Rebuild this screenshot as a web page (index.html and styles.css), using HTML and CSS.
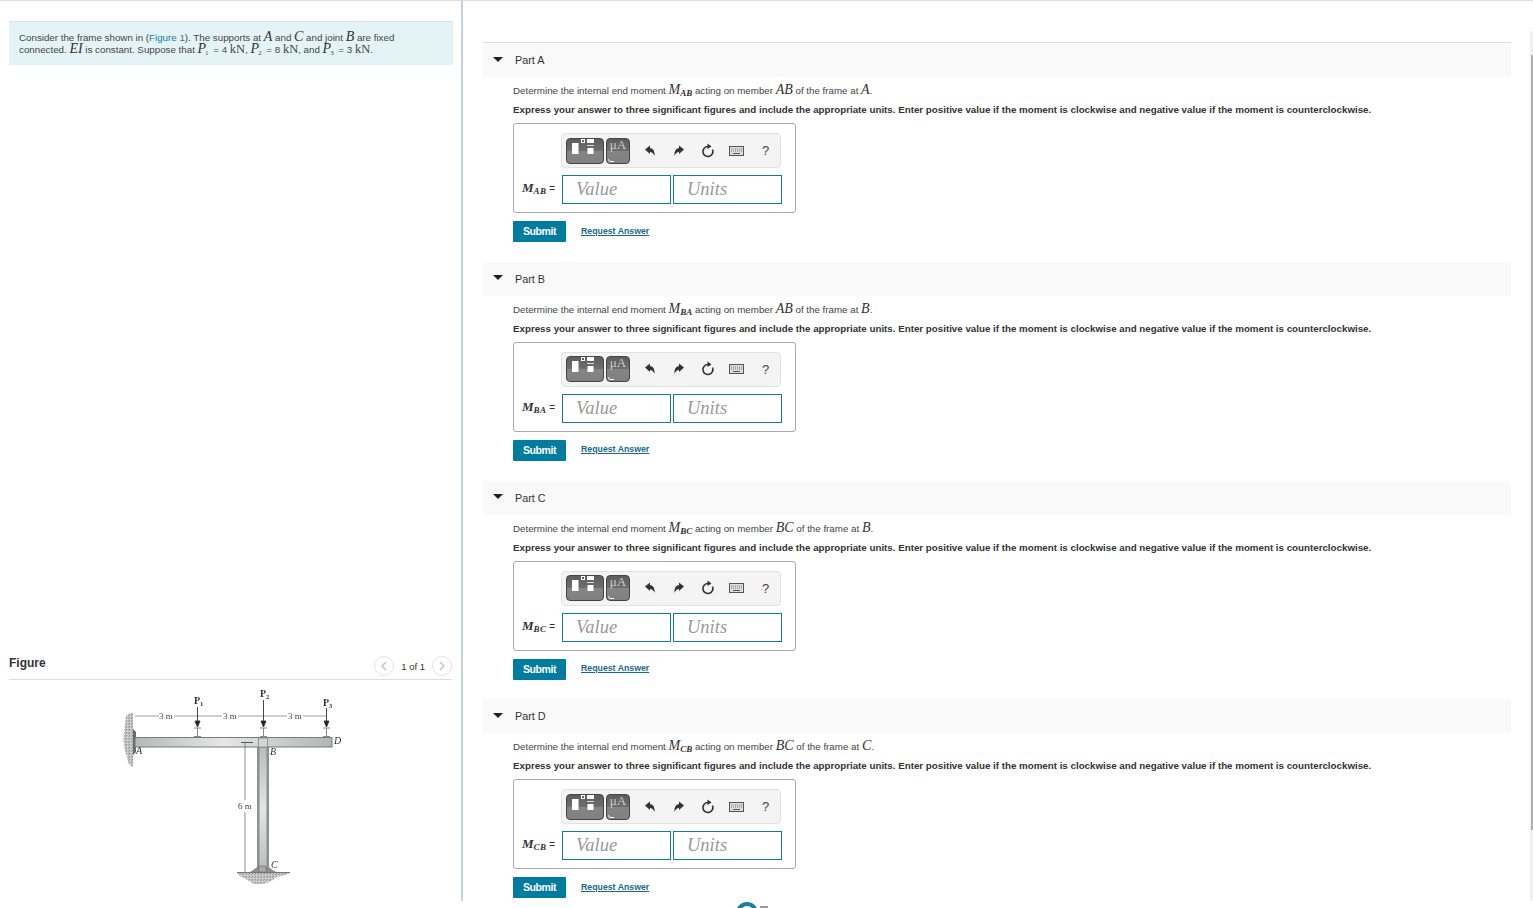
FILE: index.html
```html
<!DOCTYPE html>
<html lang="en">
  <head>
    <meta charset="UTF-8" />
    <meta name="viewport" content="width=device-width, initial-scale=1.0" />
    <title>Frame Problem</title>
    <link rel="stylesheet" href="styles.css">
  </head>
  <body>
    <div class="page">
      <div class="left-pane">
        <div class="intro">
          Consider the frame shown in (<span class="link">Figure 1</span>). The supports at <i class="m">A</i> and <i class="m">C</i> and joint <i class="m">B</i> are fixed<br />
          connected. <i class="m">EI</i> is constant. Suppose that <i class="m">P</i><sub class="mini">1</sub> = 4 <span class="u">kN</span>, <i class="m">P</i><sub class="mini">2</sub> = 8 <span class="u">kN</span>, and <i class="m">P</i><sub class="mini">3</sub> = 3 <span class="u">kN</span>.
        </div>

        <div class="figure-head">
          <span class="figure-title">Figure</span>
          <div class="pager">
            <span class="pager-btn"><svg width="8" height="10" viewBox="0 0 8 10"><path d="M6 1 L2 5 L6 9" fill="none" stroke="#b9c0cc" stroke-width="1.4" /></svg></span>
            <span class="pager-text">1 of 1</span>
            <span class="pager-btn"><svg width="8" height="10" viewBox="0 0 8 10"><path d="M2 1 L6 5 L2 9" fill="none" stroke="#b9c0cc" stroke-width="1.4" /></svg></span>
          </div>
        </div>

        <svg class="frame-fig" width="240" height="220" viewBox="110 680 240 220">
          <defs>
            <linearGradient id="beamH" x1="0" y1="0" x2="1" y2="0">
              <stop offset="0" stop-color="#b5b8b7" />
              <stop offset="0.45" stop-color="#e6e7e6" />
              <stop offset="1" stop-color="#b2b5b4" />
            </linearGradient>
            <linearGradient id="beamV" x1="0" y1="0" x2="0" y2="1">
              <stop offset="0" stop-color="#b9bcbb" />
              <stop offset="0.5" stop-color="#e4e5e4" />
              <stop offset="1" stop-color="#b9bcbb" />
            </linearGradient>
            <pattern id="speckle" width="3" height="3" patternUnits="userSpaceOnUse">
              <rect width="3" height="3" fill="#c2c3c2" />
              <rect x="0" y="0" width="1" height="1" fill="#8f908f" />
              <rect x="2" y="1" width="1" height="1" fill="#a3a4a3" />
              <rect x="1" y="2" width="1" height="1" fill="#e0e0e0" />
            </pattern>
            <filter id="soft"><feGaussianBlur stdDeviation="0.35" /></filter>
          </defs>
          <g filter="url(#soft)">
            <!-- wall -->
            <path d="M126 716 Q131 712 133 713 L133 767 Q128 766 127 757 Q122 745 124 733 Z" fill="url(#speckle)" />
            <path d="M133 729 L136 732 L136 752 L133 755 Z" fill="#6a6a6a" />
            <!-- column -->
            <rect x="257" y="746" width="12" height="126" fill="url(#beamV)" />
            <rect x="257" y="746" width="2.500" height="124" fill="#8d9090" />
            <rect x="266.500" y="746" width="2.500" height="124" fill="#8d9090" />
            <!-- beam -->
            <rect x="135" y="737.500" width="197" height="9.500" fill="url(#beamH)" stroke="#777a7a" stroke-width="1" />
            <rect x="258.500" y="738" width="9" height="9" fill="#d4d5d4" stroke="#888" stroke-width="0.8" />
            <!-- base -->
            <path d="M237 873 L290 873 Q284 876 276 877 Q270 885 254 884 Q246 879 240 876 Z" fill="url(#speckle)" />
            <path d="M237 872.500 L290 872.500" stroke="#777" stroke-width="1" />
            <path d="M250 872 Q255 869 257 867 L269 867 Q272 870 276 872 Z" fill="#8d8f8e" />
            <rect x="259" y="866" width="7" height="6" fill="#aaa" stroke="#666" stroke-width="0.6" />
            <!-- dimension lines -->
            <path d="M135 716 H159 M174 716 H222 M238 716 H287 M303 716 H326" stroke="#777" stroke-width="0.7" fill="none" />
            <path d="M241 742.500 H253" stroke="#555" stroke-width="1" />
            <path d="M245 743 V800 M245 812 V872" stroke="#666" stroke-width="0.7" />
            <!-- loads -->
            <g stroke="#333" stroke-width="0.9" fill="#222">
              <path d="M197.500 707 V722" fill="none" />
              <path d="M195 721 L200 721 L197.500 727 Z" />
              <path d="M263.500 700 V722" fill="none" />
              <path d="M261 721 L266 721 L263.500 727 Z" />
              <path d="M326.500 708 V722" fill="none" />
              <path d="M324 721 L329 721 L326.500 727 Z" />
            </g>
            <path d="M194 728 H201 M197.500 728 V737 M194 736.500 H201 M260 728 H267 M263.500 728 V737 M260 736.500 H267 M323 728 H330 M326.500 728 V737 M323 736.500 H330" stroke="#888" stroke-width="1" fill="none" />
            <!-- labels -->
            <g class="fig-label">
              <text x="159" y="719">3 m</text>
              <text x="223" y="719">3 m</text>
              <text x="288" y="719">3 m</text>
              <text x="238" y="809">6 m</text>
            </g>
            <g class="fig-bold">
              <text x="194" y="704">P<tspan class="fig-sub" dy="2">1</tspan></text>
              <text x="260" y="697">P<tspan class="fig-sub" dy="2">2</tspan></text>
              <text x="323" y="706">P<tspan class="fig-sub" dy="2">3</tspan></text>
            </g>
            <g class="fig-italic">
              <text x="136" y="754">A</text>
              <text x="270" y="755">B</text>
              <text x="334" y="744">D</text>
              <text x="271" y="868">C</text>
            </g>
          </g>
        </svg>
      </div>

      <div class="right-pane">
        <div class="part first">
          <div class="part-head"><span class="caret"></span>Part A</div>
          <div class="part-body">
            <p class="prompt">Determine the internal end moment <i class="m big">M<sub>AB</sub></i> acting on member <i class="m big">AB</i> of the frame at <i class="m big">A</i>.</p>
            <p class="express">Express your answer to three significant figures and include the appropriate units. Enter positive value if the moment is clockwise and negative value if the moment is counterclockwise.</p>
            <div class="answer-box">
              <div class="toolbar">
                <span class="tpl-btn wide"><svg width="36" height="24" viewBox="0 0 36 24"><rect x="5" y="4" width="6.500" height="11" fill="#fff" /><rect x="14.500" y="0.500" width="3" height="3" fill="none" stroke="#fff" /><rect x="20" y="0" width="7" height="4" fill="#fff" /><rect x="20" y="6" width="7" height="1" fill="#ddd" /><rect x="20.500" y="9" width="6" height="6" fill="#fff" /></svg></span>
                <span class="tpl-btn narrow">μA</span>
                <span class="tool"><svg width="14" height="14" viewBox="0 0 14 14"><path d="M2 5.500 L7 1.500 V4 Q12 4.500 11.500 12 Q10 8 7 8 V10 Z" fill="#333" /></svg></span>
                <span class="tool"><svg width="14" height="14" viewBox="0 0 14 14"><path d="M12 5.500 L7 1.500 V4 Q2 4.500 2.500 12 Q4 8 7 8 V10 Z" fill="#333" /></svg></span>
                <span class="tool"><svg width="16" height="16" viewBox="0 0 16 16"><path d="M8 3.500 A5 5 0 1 0 12.500 6.500" fill="none" stroke="#333" stroke-width="1.600" /><path d="M7.500 0.500 L11.500 3.500 L7.500 6 Z" fill="#333" /></svg></span>
                <span class="tool"><svg width="15" height="10" viewBox="0 0 15 10"><rect x="0.500" y="0.500" width="14" height="9" fill="#ddd" stroke="#555" /><path d="M2 3 H13 M2 5 H13" stroke="#777" stroke-dasharray="1 1" /><path d="M4 7.500 H11" stroke="#555" /></svg></span>
                <span class="tool help">?</span>
              </div>
              <div class="answer-row">
                <span class="var-label"><i class="m">M<sub>AB</sub></i> =</span>
                <span class="field">Value</span>
                <span class="field">Units</span>
              </div>
            </div>
            <div class="actions">
              <span class="submit">Submit</span>
              <a class="request">Request Answer</a>
            </div>
          </div>
        </div>

        <div class="part">
          <div class="part-head"><span class="caret"></span>Part B</div>
          <div class="part-body">
            <p class="prompt">Determine the internal end moment <i class="m big">M<sub>BA</sub></i> acting on member <i class="m big">AB</i> of the frame at <i class="m big">B</i>.</p>
            <p class="express">Express your answer to three significant figures and include the appropriate units. Enter positive value if the moment is clockwise and negative value if the moment is counterclockwise.</p>
            <div class="answer-box">
              <div class="toolbar">
                <span class="tpl-btn wide"><svg width="36" height="24" viewBox="0 0 36 24"><rect x="5" y="4" width="6.500" height="11" fill="#fff" /><rect x="14.500" y="0.500" width="3" height="3" fill="none" stroke="#fff" /><rect x="20" y="0" width="7" height="4" fill="#fff" /><rect x="20" y="6" width="7" height="1" fill="#ddd" /><rect x="20.500" y="9" width="6" height="6" fill="#fff" /></svg></span>
                <span class="tpl-btn narrow">μA</span>
                <span class="tool"><svg width="14" height="14" viewBox="0 0 14 14"><path d="M2 5.500 L7 1.500 V4 Q12 4.500 11.500 12 Q10 8 7 8 V10 Z" fill="#333" /></svg></span>
                <span class="tool"><svg width="14" height="14" viewBox="0 0 14 14"><path d="M12 5.500 L7 1.500 V4 Q2 4.500 2.500 12 Q4 8 7 8 V10 Z" fill="#333" /></svg></span>
                <span class="tool"><svg width="16" height="16" viewBox="0 0 16 16"><path d="M8 3.500 A5 5 0 1 0 12.500 6.500" fill="none" stroke="#333" stroke-width="1.600" /><path d="M7.500 0.500 L11.500 3.500 L7.500 6 Z" fill="#333" /></svg></span>
                <span class="tool"><svg width="15" height="10" viewBox="0 0 15 10"><rect x="0.500" y="0.500" width="14" height="9" fill="#ddd" stroke="#555" /><path d="M2 3 H13 M2 5 H13" stroke="#777" stroke-dasharray="1 1" /><path d="M4 7.500 H11" stroke="#555" /></svg></span>
                <span class="tool help">?</span>
              </div>
              <div class="answer-row">
                <span class="var-label"><i class="m">M<sub>BA</sub></i> =</span>
                <span class="field">Value</span>
                <span class="field">Units</span>
              </div>
            </div>
            <div class="actions">
              <span class="submit">Submit</span>
              <a class="request">Request Answer</a>
            </div>
          </div>
        </div>

        <div class="part">
          <div class="part-head"><span class="caret"></span>Part C</div>
          <div class="part-body">
            <p class="prompt">Determine the internal end moment <i class="m big">M<sub>BC</sub></i> acting on member <i class="m big">BC</i> of the frame at <i class="m big">B</i>.</p>
            <p class="express">Express your answer to three significant figures and include the appropriate units. Enter positive value if the moment is clockwise and negative value if the moment is counterclockwise.</p>
            <div class="answer-box">
              <div class="toolbar">
                <span class="tpl-btn wide"><svg width="36" height="24" viewBox="0 0 36 24"><rect x="5" y="4" width="6.500" height="11" fill="#fff" /><rect x="14.500" y="0.500" width="3" height="3" fill="none" stroke="#fff" /><rect x="20" y="0" width="7" height="4" fill="#fff" /><rect x="20" y="6" width="7" height="1" fill="#ddd" /><rect x="20.500" y="9" width="6" height="6" fill="#fff" /></svg></span>
                <span class="tpl-btn narrow">μA</span>
                <span class="tool"><svg width="14" height="14" viewBox="0 0 14 14"><path d="M2 5.500 L7 1.500 V4 Q12 4.500 11.500 12 Q10 8 7 8 V10 Z" fill="#333" /></svg></span>
                <span class="tool"><svg width="14" height="14" viewBox="0 0 14 14"><path d="M12 5.500 L7 1.500 V4 Q2 4.500 2.500 12 Q4 8 7 8 V10 Z" fill="#333" /></svg></span>
                <span class="tool"><svg width="16" height="16" viewBox="0 0 16 16"><path d="M8 3.500 A5 5 0 1 0 12.500 6.500" fill="none" stroke="#333" stroke-width="1.600" /><path d="M7.500 0.500 L11.500 3.500 L7.500 6 Z" fill="#333" /></svg></span>
                <span class="tool"><svg width="15" height="10" viewBox="0 0 15 10"><rect x="0.500" y="0.500" width="14" height="9" fill="#ddd" stroke="#555" /><path d="M2 3 H13 M2 5 H13" stroke="#777" stroke-dasharray="1 1" /><path d="M4 7.500 H11" stroke="#555" /></svg></span>
                <span class="tool help">?</span>
              </div>
              <div class="answer-row">
                <span class="var-label"><i class="m">M<sub>BC</sub></i> =</span>
                <span class="field">Value</span>
                <span class="field">Units</span>
              </div>
            </div>
            <div class="actions">
              <span class="submit">Submit</span>
              <a class="request">Request Answer</a>
            </div>
          </div>
        </div>

        <div class="part">
          <div class="part-head"><span class="caret"></span>Part D</div>
          <div class="part-body">
            <p class="prompt">Determine the internal end moment <i class="m big">M<sub>CB</sub></i> acting on member <i class="m big">BC</i> of the frame at <i class="m big">C</i>.</p>
            <p class="express">Express your answer to three significant figures and include the appropriate units. Enter positive value if the moment is clockwise and negative value if the moment is counterclockwise.</p>
            <div class="answer-box">
              <div class="toolbar">
                <span class="tpl-btn wide"><svg width="36" height="24" viewBox="0 0 36 24"><rect x="5" y="4" width="6.500" height="11" fill="#fff" /><rect x="14.500" y="0.500" width="3" height="3" fill="none" stroke="#fff" /><rect x="20" y="0" width="7" height="4" fill="#fff" /><rect x="20" y="6" width="7" height="1" fill="#ddd" /><rect x="20.500" y="9" width="6" height="6" fill="#fff" /></svg></span>
                <span class="tpl-btn narrow">μA</span>
                <span class="tool"><svg width="14" height="14" viewBox="0 0 14 14"><path d="M2 5.500 L7 1.500 V4 Q12 4.500 11.500 12 Q10 8 7 8 V10 Z" fill="#333" /></svg></span>
                <span class="tool"><svg width="14" height="14" viewBox="0 0 14 14"><path d="M12 5.500 L7 1.500 V4 Q2 4.500 2.500 12 Q4 8 7 8 V10 Z" fill="#333" /></svg></span>
                <span class="tool"><svg width="16" height="16" viewBox="0 0 16 16"><path d="M8 3.500 A5 5 0 1 0 12.500 6.500" fill="none" stroke="#333" stroke-width="1.600" /><path d="M7.500 0.500 L11.500 3.500 L7.500 6 Z" fill="#333" /></svg></span>
                <span class="tool"><svg width="15" height="10" viewBox="0 0 15 10"><rect x="0.500" y="0.500" width="14" height="9" fill="#ddd" stroke="#555" /><path d="M2 3 H13 M2 5 H13" stroke="#777" stroke-dasharray="1 1" /><path d="M4 7.500 H11" stroke="#555" /></svg></span>
                <span class="tool help">?</span>
              </div>
              <div class="answer-row">
                <span class="var-label"><i class="m">M<sub>CB</sub></i> =</span>
                <span class="field">Value</span>
                <span class="field">Units</span>
              </div>
            </div>
            <div class="actions">
              <span class="submit">Submit</span>
              <a class="request">Request Answer</a>
            </div>
          </div>
        </div>

        <div class="feedback-mark"></div>
        <div class="feedback-dash"></div>
      </div>

      <div class="scrollbar"><div class="scroll-thumb"></div></div>
    </div>
  </body>
</html>
```

FILE: styles.css
```css
* {
  margin: 0;
  padding: 0;
  box-sizing: border-box;
}

html,
body {
  height: 908px;
  overflow: hidden;
}

body {
  font-family: "Liberation Sans", Arial, sans-serif;
  font-size: 9.75px;
  color: #333;
  background-color: white;
}

.page {
  display: flex;
  height: 908px;
  border-top: 1px solid #ddd;
  position: relative;
}

.left-pane {
  width: 463px;
  height: 900px;
  flex-shrink: 0;
  border-right: 2px solid #c3d1de;
  padding: 20px 9px 0 9px;
}

.intro {
  width: 444px;
  height: 44px;
  background-color: #e4f4f6;
  border-top: 1px solid #d5e4ea;
  padding: 10px 9px 0 10px;
  line-height: 11.5px;
  font-size: 9.75px;
  color: #444;
}

.intro .m,
.intro .u {
  line-height: 0;
}

.link {
  color: #1a7ca0;
}

.m {
  font-family: "Liberation Serif", "Times New Roman", serif;
  font-size: 14px;
  font-style: italic;
  color: #333;
}

.m sub {
  font-size: 9px;
  font-weight: bold;
  vertical-align: -2px;
  line-height: 0;
}

.mini {
  font-family: "Liberation Serif", serif;
  font-size: 7px;
  vertical-align: -2px;
  line-height: 0;
  margin-left: -1px;
  margin-right: 2px;
}

.u {
  font-family: "Liberation Serif", serif;
  font-size: 12.5px;
}

.figure-head {
  display: flex;
  justify-content: space-between;
  align-items: flex-end;
  width: 443px;
  height: 36px;
  margin-top: 579px;
  border-bottom: 1px solid #ddd;
  padding-bottom: 3px;
}

.figure-title {
  font-size: 12px;
  font-weight: bold;
  color: #333;
  margin-bottom: 6px;
}

.pager {
  display: flex;
  align-items: center;
  gap: 7px;
}

.pager-btn {
  display: flex;
  align-items: center;
  justify-content: center;
  width: 20px;
  height: 20px;
  border: 1px solid #e3e3e3;
  border-radius: 50%;
}

.pager-text {
  font-size: 9.5px;
  color: #333;
}

.frame-fig {
  display: block;
  margin-left: 101px;
}

.fig-label text {
  font-family: "Liberation Serif", serif;
  font-size: 9px;
  fill: #444;
}

.fig-bold text {
  font-family: "Liberation Serif", serif;
  font-size: 10px;
  font-weight: bold;
  fill: #333;
}

.fig-sub {
  font-size: 6.5px;
}

.fig-italic text {
  font-family: "Liberation Serif", serif;
  font-size: 10px;
  font-style: italic;
  fill: #333;
}

.right-pane {
  flex: 1;
  padding: 41px 22px 0 20px;
  min-width: 0;
}

.part {
  height: 218.8px;
}

.part.first {
  height: 219.8px;
  border-top: 1px solid #ddd;
}

.part-head {
  display: flex;
  align-items: center;
  height: 34px;
  background-color: #f9f9f9;
  font-size: 10.8px;
  color: #333;
}

.caret {
  width: 0;
  height: 0;
  border-left: 5px solid transparent;
  border-right: 5px solid transparent;
  border-top: 5px solid #222;
  margin: -2px 12px 0 10px;
}

.part-body {
  padding: 4px 0 0 30px;
}

.prompt {
  height: 22px;
  line-height: 17px;
  color: #444;
}

.m.big {
  font-size: 14px;
}

.express {
  height: 14px;
  line-height: 14px;
  font-weight: bold;
  color: #333;
}

.answer-box {
  width: 283px;
  height: 90px;
  margin-top: 6px;
  border: 1px solid #aaa;
  border-radius: 3px;
  padding: 9px 13px 0 47px;
}

.toolbar {
  display: flex;
  align-items: center;
  width: 220px;
  height: 35px;
  background-color: #f4f4f4;
  border: 1px solid #e2e2e2;
  border-radius: 4px;
  padding: 0 0 0 4px;
}

.tpl-btn {
  display: block;
  height: 26px;
  border: 1px solid #444;
  border-radius: 4px;
  background: linear-gradient(#5e5e5e, #6e6e6e 50%, #858585 50%, #808080);
  color: #ccc;
}

.tpl-btn.wide {
  width: 38px;
  margin-right: 2px;
}

.tpl-btn.narrow {
  position: relative;
  width: 24px;
  font-family: "Liberation Serif", serif;
  font-size: 13px;
  text-align: center;
  line-height: 11px;
  margin-right: 5px;
}

.tpl-btn.narrow::after {
  content: "";
  position: absolute;
  left: 1px;
  bottom: 1px;
  width: 5px;
  height: 2px;
  border-bottom: 1px solid #fff;
  border-left: 1px solid #ddd;
  border-bottom-left-radius: 3px;
}

.tool {
  display: flex;
  align-items: center;
  justify-content: center;
  width: 29px;
  height: 16px;
}

.help {
  font-size: 13px;
  color: #444;
}

.answer-row {
  display: flex;
  align-items: center;
  gap: 2px;
  height: 29px;
  margin-top: 7px;
  margin-left: -39px;
}

.var-label {
  width: 38px;
  color: #333;
  font-size: 10px;
  white-space: nowrap;
  margin-top: -3px;
}

.var-label .m {
  font-size: 13px;
  font-weight: bold;
}

.var-label .m sub {
  font-size: 9px;
  letter-spacing: 0.4px;
}

.field {
  display: block;
  width: 109px;
  height: 29px;
  border: 1px solid #1a7a94;
  padding-left: 13px;
  font-family: "Liberation Serif", serif;
  font-size: 18.5px;
  font-style: italic;
  line-height: 27px;
  color: #999;
}

.actions {
  display: flex;
  align-items: center;
  gap: 15px;
  margin-top: 8px;
}

.submit {
  display: block;
  width: 53px;
  height: 21px;
  background-color: #007c9e;
  border-radius: 1px;
  color: white;
  font-size: 10.5px;
  font-weight: bold;
  letter-spacing: -0.45px;
  text-align: center;
  line-height: 21px;
}

.request {
  color: #1a6a8a;
  font-size: 8.75px;
  font-weight: bold;
  text-decoration: underline;
  margin-top: -2px;
}

.feedback-mark {
  position: absolute;
  left: 736px;
  top: 901px;
  width: 22px;
  height: 22px;
  border: 4px solid #1b7fa0;
  border-radius: 50%;
}

.feedback-dash {
  position: absolute;
  left: 760px;
  top: 905px;
  width: 8px;
  height: 2px;
  background-color: #999;
}

.scrollbar {
  position: absolute;
  right: 0;
  top: 30px;
  width: 3px;
  height: 870px;
  background-color: #f1f1f1;
}

.scroll-thumb {
  margin-top: 24px;
  margin-left: 1px;
  width: 2px;
  height: 775px;
  background-color: #b0b0b0;
}
```
